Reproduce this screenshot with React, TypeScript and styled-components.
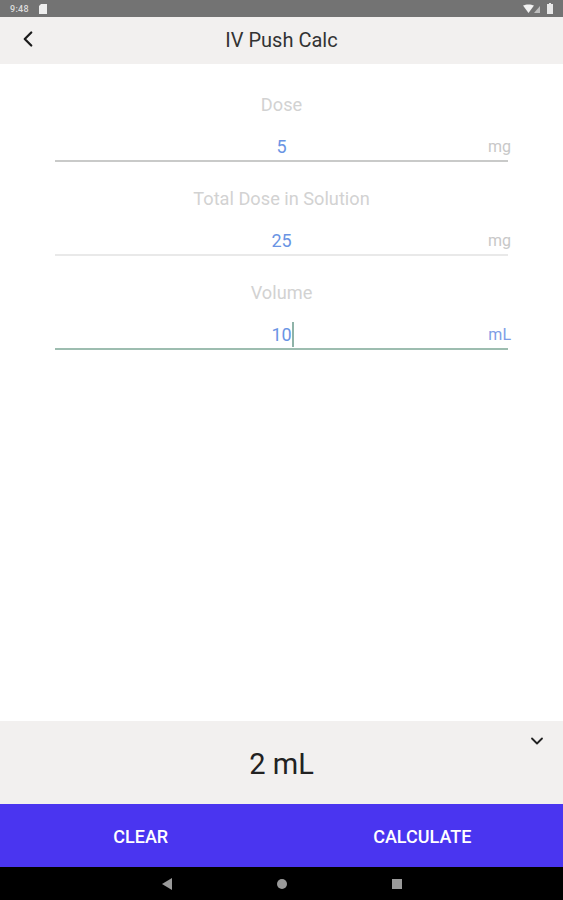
import React from 'react'
import styled, { createGlobalStyle } from 'styled-components'
import { ChevronDown, ChevronLeft } from 'lucide-react'

const GlobalStyle = createGlobalStyle`
    html, body {
        margin: 0;
        padding: 0;
        background: #fff;
    }
    body {
        font-family: Roboto, "Liberation Sans", sans-serif;
    }
`

const Screen = styled.div`
    display: flex;
    flex-direction: column;
    width: 563px;
    height: 900px;
    overflow: hidden;
`

const StatusBar = styled.div`
    display: flex;
    align-items: center;
    justify-content: space-between;
    flex: 0 0 17px;
    padding: 0 10px 0 10px;
    background: #737373;
    box-sizing: border-box;
`

const StatusGroup = styled.div`
    display: flex;
    align-items: center;
    gap: 10px;
`

const StatusIcons = styled(StatusGroup)`
    gap: 4px;
`

const StatusTime = styled.span`
    color: #dcdcdc;
    font-size: 9px;
    font-weight: 500;
    letter-spacing: 0.3px;
`

const Header = styled.header`
    position: relative;
    display: flex;
    align-items: center;
    justify-content: center;
    flex: 0 0 47px;
    background: #f2f0ef;
`

const BackButton = styled.div`
    position: absolute;
    left: 15px;
    top: 9px;
    display: flex;
    color: #1b1b1b;
`

const Title = styled.h1`
    margin: 0 0 1px;
    color: #333;
    font-size: 20px;
    font-weight: 400;
`

const Form = styled.main`
    flex: 1;
    padding: 31px 55px 0;
    background: #fff;
`

const Field = styled.div`
    height: 94px;
`

const Label = styled.div`
    height: 20px;
    color: #d2d2d2;
    font-size: 18.2px;
    line-height: 20px;
    text-align: center;
`

const InputRow = styled.div<{ $line: string }>`
    position: relative;
    display: flex;
    justify-content: center;
    height: 47px;
    box-sizing: border-box;
    padding-top: 21px;
    border-bottom: 2px solid ${p => p.$line};
`

const Value = styled.span`
    position: relative;
    color: #6a94e4;
    font-size: 18px;
    line-height: 21px;
    height: 21px;
`

const Caret = styled.span`
    position: absolute;
    right: -2px;
    top: -2px;
    width: 1.5px;
    height: 25px;
    background: #8fb3a8;
`

const Unit = styled.span<{ $active?: boolean }>`
    position: absolute;
    right: -3px;
    top: 22px;
    color: ${p => (p.$active ? '#7d9de6' : '#c8c8c8')};
    font-size: 16px;
    line-height: 20px;
`

const ResultPanel = styled.section`
    position: relative;
    display: flex;
    align-items: center;
    justify-content: center;
    flex: 0 0 83px;
    background: #f2f0ef;
`

const ResultText = styled.div`
    color: #222;
    font-size: 29px;
    padding-top: 3px;
`

const Collapse = styled.div`
    position: absolute;
    right: 16px;
    top: 10px;
    display: flex;
    color: #222;
`

const Actions = styled.div`
    display: flex;
    flex: 0 0 63px;
    background: #4a35f0;
`

const ActionButton = styled.button`
    flex: 1;
    border: 0;
    padding: 1px 0 0;
    background: transparent;
    color: #fff;
    font-family: inherit;
    font-size: 18px;
    font-weight: 500;
`

const NavBar = styled.nav`
    display: flex;
    align-items: center;
    justify-content: center;
    gap: 103px;
    flex: 0 0 33px;
    background: #000;
`

const NavIcon = styled.svg`
    display: block;
    width: 12px;
    height: 12px;
    fill: #9a9a9a;
`

const fields = [
    { label: 'Dose', value: '5', unit: 'mg', line: '#c9cac9' },
    { label: 'Total Dose in Solution', value: '25', unit: 'mg', line: '#e9e9e9' },
    { label: 'Volume', value: '10', unit: 'mL', line: '#9dbdb0', active: true },
]

const App = () => (
    <Screen>
        <GlobalStyle />
        <StatusBar>
            <StatusGroup>
                <StatusTime>9:48</StatusTime>
                <svg width="8" height="10" viewBox="0 0 8 10">
                    <path d="M2 0h6v10H0V2z" fill="#eee" />
                </svg>
            </StatusGroup>
            <StatusIcons>
                <svg width="20" height="10" viewBox="0 0 20 10">
                    <path d="M0 1.5C3 0 8 0 11 1.5L5.5 9z" fill="#f2f2f2" />
                    <path d="M17 2v7h-6z" fill="#bdbdbd" />
                </svg>
                <svg width="6" height="11" viewBox="0 0 6 11">
                    <path d="M2 0h2v1h2v10H0V1h2z" fill="#e8e8e8" />
                </svg>
            </StatusIcons>
        </StatusBar>
        <Header>
            <BackButton>
                <ChevronLeft size={26} strokeWidth={2.1} />
            </BackButton>
            <Title>IV Push Calc</Title>
        </Header>
        <Form>
            {fields.map(f => (
                <Field key={f.label}>
                    <Label>{f.label}</Label>
                    <InputRow $line={f.line}>
                        <Value>
                            {f.value}
                            {f.active && <Caret />}
                        </Value>
                        <Unit $active={f.active}>{f.unit}</Unit>
                    </InputRow>
                </Field>
            ))}
        </Form>
        <ResultPanel>
            <ResultText>2 mL</ResultText>
            <Collapse>
                <ChevronDown size={20} strokeWidth={2.2} />
            </Collapse>
        </ResultPanel>
        <Actions>
            <ActionButton>CLEAR</ActionButton>
            <ActionButton>CALCULATE</ActionButton>
        </Actions>
        <NavBar>
            <NavIcon viewBox="0 0 12 12">
                <path d="M11 0v12L1 6z" />
            </NavIcon>
            <NavIcon viewBox="0 0 12 12">
                <circle cx="6" cy="6" r="5" />
            </NavIcon>
            <NavIcon viewBox="0 0 12 12">
                <rect x="1" y="1" width="10" height="10" />
            </NavIcon>
        </NavBar>
    </Screen>
)

export default App
